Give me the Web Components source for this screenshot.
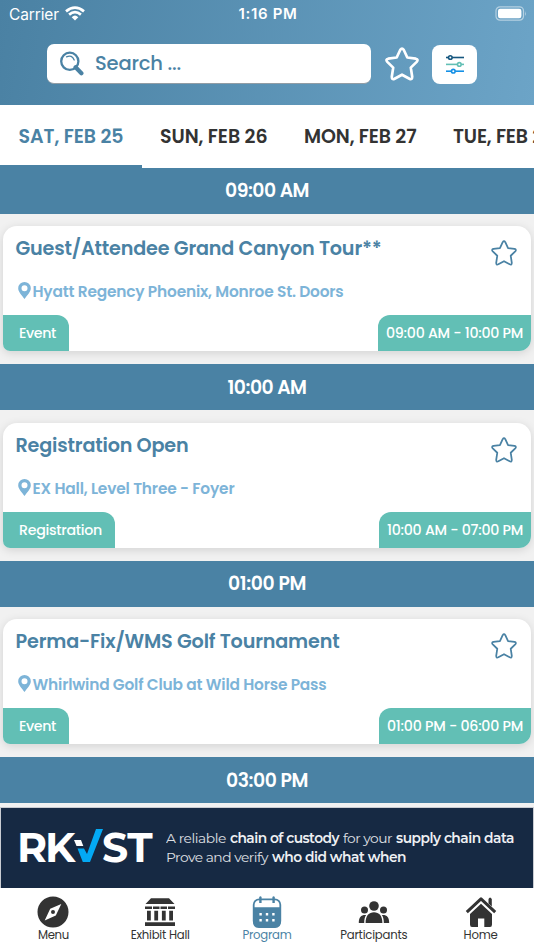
<!DOCTYPE html>
<html lang="en">
<head>
<meta charset="utf-8">
<meta name="viewport" content="width=device-width, initial-scale=1">
<title>Program</title>
<style>
  html, body { margin: 0; height: 100%; overflow: hidden; }
  body {
    --blue: #4a82a4;
    --light: #7db4d8;
    --teal: #62bfb5;
    --ink: #333;
    font-family: Poppins, Inter, "Liberation Sans", sans-serif;
    background: #f1f1f1;
  }
</style>
</head>
<body>
<program-app></program-app>

<script>
const define = (name, html, setup) => {
  const tpl = document.createElement("template");
  tpl.innerHTML = html;
  customElements.define(name, class extends HTMLElement {
    connectedCallback() {
      if (this.shadowRoot) return;
      this.attachShadow({ mode: "open" }).append(tpl.content.cloneNode(true));
      if (setup) setup(this, this.shadowRoot);
    }
  });
};

// <fit-text w="104">label</fit-text>: tracks a label out or in to a given width
define("fit-text", `
  <style>
    :host { display: inline-block; white-space: nowrap; }
    span { display: inline-block; }
  </style>
  <span><slot></slot></span>
`, (el, root) => {
  const w = parseFloat(el.getAttribute("w"));
  const n = el.textContent.length;
  if (!w || !n) return;
  const span = root.querySelector("span");
  span.style.letterSpacing = (w - span.getBoundingClientRect().width) / n + "px";
  el.style.width = w + "px";
});

define("star-icon", `
  <style>
    :host { display: block; width: 26px; height: 26px; }
    svg { display: block; width: 100%; height: 100%; overflow: visible; }
  </style>
  <svg viewBox="0 0 34 34" fill="none" stroke="currentColor" stroke-linejoin="round">
    <path d="M15.3 2.8Q17 .3 18.7 2.8L22.3 10.5L30.8 11.7Q33.8 12.5 31.7 14.9L25.8 20.6L27.2 29.8Q27.2 33.2 24.4 31.8L17 27.7L9.6 31.8Q6.8 33.2 6.8 29.8L8.2 20.6L2.3 14.9Q.2 12.5 3.2 11.7L11.7 10.5Z"/>
  </svg>
`, (el, root) => {
  root.querySelector("path").setAttribute("stroke-width", el.getAttribute("stroke") || 2.3);
});

define("status-bar", `
  <style>
    :host { display: grid; grid-template-columns: 1fr auto 1fr; align-items: center; height: 27px; padding: 0 7px 0 9px; color: #fff; font: 15.5px Inter, sans-serif; }
    .net { display: flex; align-items: center; gap: 6px; }
    .net fit-text { padding-top: 1px; }
    .time { font-weight: 600; font-size: 15px; }
    .battery { justify-self: end; }
    svg { display: block; }
  </style>
  <div class="net"><fit-text w="50">Carrier</fit-text>
    <svg width="20" height="15" viewBox="0 0 20 15" fill="none" stroke="#fff" stroke-width="2.7">
      <path d="M1 5.4Q10-2.2 19 5.4M4.1 8.6Q10 3.6 15.9 8.6"/><path d="M6.7 11.2Q10 8 13.3 11.2L10 14.6Z" fill="#fff" stroke="none"/>
    </svg>
  </div>
  <div class="time"><fit-text w="59">1:16 PM</fit-text></div>
  <svg class="battery" width="32" height="15" viewBox="0 0 32 15">
    <rect x="1" y=".8" width="27.5" height="13.4" rx="4" fill="none" stroke="#fff" stroke-opacity=".5" stroke-width="1.2"/>
    <rect x="3" y="2.8" width="23.4" height="9.4" rx="2.2" fill="#fff"/>
    <path d="M30 5Q31.6 7.5 30 10Z" fill="#fff" fill-opacity=".5"/>
  </svg>
`);

define("search-row", `
  <style>
    :host { display: flex; align-items: center; padding: 17px 0 0 47px; color: #fff; }
    .box { box-sizing: border-box; width: 324px; height: 40px; padding-left: 13px; display: flex; align-items: center; gap: 11px; background: #fff; border-radius: 7px; border-bottom: 1px solid #929da5; color: var(--blue); font-size: 19.5px; font-weight: 500; }
    .box fit-text { padding-bottom: 1px; }
    star-icon { width: 34px; height: 34px; margin: 0 13px 0 14px; }
    .filter { width: 45px; height: 39px; display: grid; place-items: center; background: #fff; border-radius: 8px; }
    svg { display: block; }
  </style>
  <div class="box">
    <svg width="24" height="25" viewBox="0 0 24 25" fill="none" stroke="currentColor">
      <circle cx="9.8" cy="10.3" r="8.6" stroke-width="2.3"/>
      <path d="M6.5 5.8Q12 3.5 14.2 9" stroke-width="1.3" stroke-linecap="round"/>
      <path d="M15.6 16.3L21.4 22.2" stroke-width="4.2" stroke-linecap="round"/>
    </svg>
    <fit-text w="86">Search ...</fit-text>
  </div>
  <star-icon stroke="2.7"></star-icon>
  <div class="filter">
    <svg width="20" height="20" viewBox="0 0 20 20" fill="#fff" stroke-width="1.6">
      <g stroke="#17577f"><path d="M1 3.5H19"/><circle cx="5.3" cy="3.5" r="1.8"/></g>
      <g stroke="#62bfb5"><path d="M1 10.4H19"/><circle cx="14.3" cy="10.4" r="1.8"/></g>
      <g stroke="#1590e6"><path d="M1 17.2H19"/><circle cx="8.3" cy="17.2" r="1.8"/></g>
    </svg>
  </div>
`);

define("day-tab", `
  <style>
    :host { flex: none; display: flex; align-items: center; justify-content: center; box-sizing: border-box; padding: 2px 18px 0 18.5px; color: var(--ink); border-bottom: 3px solid transparent; }
    :host([active]) { color: var(--blue); border-color: var(--blue); }
  </style>
  <slot></slot>
`);

define("day-tabs", `
  <style>
    :host { display: flex; height: 63px; background: #fff; overflow: hidden; font-size: 19px; font-weight: 600; }
  </style>
  <slot></slot>
`);

define("time-bar", `
  <style>
    :host { display: flex; align-items: center; justify-content: center; height: 46px; background: var(--blue); color: #fff; font-size: 18.8px; font-weight: 600; }
  </style>
  <slot></slot>
`);

define("session-card", `
  <style>
    :host { display: flex; flex-direction: column; justify-content: space-between; height: 125px; margin: 12.5px 3px 13px; border-radius: 14px 14px 12px 7px; overflow: hidden; background: #fff; box-shadow: 0 2px 10px rgba(0,0,0,.13); }
    .top { display: flex; justify-content: space-between; padding: 10px 14px 0 12.5px; }
    .title { color: var(--blue); font-size: 19.2px; font-weight: 600; line-height: 26px; }
    .place { display: flex; align-items: center; gap: 2px; margin-top: 19px; padding-left: 2px; color: var(--light); font-size: 15.4px; font-weight: 600; line-height: 22px; }
    .place svg { margin-top: -3px; }
    star-icon { color: var(--blue); margin-top: 4px; }
    .foot { display: flex; justify-content: space-between; height: 36px; color: #fff; font-size: 14.2px; font-weight: 500; line-height: 37px; }
    .tag, .when { background: var(--teal); }
    .tag { padding: 0 13px 0 16px; border-top-right-radius: 12px; }
    .when { padding: 0 8px; border-top-left-radius: 12px; }
  </style>
  <div class="top">
    <div>
      <div class="title"><slot name="title"></slot></div>
      <div class="place">
        <svg width="13" height="17" viewBox="0 0 13 17"><path fill="currentColor" fill-rule="evenodd" d="M6.5 0A6.3 6.3 0 0 0 .2 6.3C.2 10 4 13.5 6.5 17C9 13.5 12.8 10 12.8 6.3A6.3 6.3 0 0 0 6.5 0ZM6.5 3.3A3 3 0 1 1 6.5 9.3A3 3 0 1 1 6.5 3.3Z"/></svg>
        <slot name="place"></slot>
      </div>
    </div>
    <star-icon></star-icon>
  </div>
  <div class="foot">
    <div class="tag"><slot name="tag"></slot></div>
    <div class="when"><slot name="when"></slot></div>
  </div>
`);

define("sponsor-banner", `
  <style>
    :host { display: flex; align-items: center; box-sizing: border-box; height: 80px; margin: 0 1px; padding-left: 16px; background: #162943; color: #eef0f3; outline: 1px solid #c9ccd2; font: 13.8px Montserrat, Inter, sans-serif; }
    .logo { display: flex; align-items: center; width: 135px; height: 48px; margin-right: 14px; color: #fff; font: 700 41px/46px Montserrat, Inter, sans-serif; }
    .logo fit-text { margin-top: -2px; }
    .logo svg { display: block; margin: -6px -3px 0 0; }
    .copy { line-height: 19.5px; }
    .light { font-weight: 400; opacity: .92; }
    b { font-weight: 600; }
    .row { display: flex; gap: 4px; }
  </style>
  <div class="logo">
    <fit-text w="56">RK</fit-text>
    <svg width="32" height="35" viewBox="0 0 32 35"><path fill="#fff" d="M1 12H8L10.3 18H3.5Z"/><path fill="#03a9f4" d="M4.5 20.5H11L14 26L23 1H30L17 34H9.8Z"/></svg>
    <fit-text w="50">ST</fit-text>
  </div>
  <div class="copy">
    <div class="row"><fit-text class="light" w="60">A reliable</fit-text><b><fit-text w="109">chain of custody</fit-text></b><fit-text class="light" w="49">for your</fit-text><b><fit-text w="118">supply chain data</fit-text></b></div>
    <div class="row"><fit-text class="light" w="102">Prove and verify</fit-text><b><fit-text w="134">who did what when</fit-text></b></div>
  </div>
`);

define("nav-item", `
  <style>
    :host { flex: 1; display: flex; flex-direction: column; align-items: center; padding-top: 8px; color: var(--ink); font-size: 11.7px; line-height: 15px; }
    :host([active]) { color: var(--blue); }
    ::slotted(svg) { display: block; width: 32px; height: 32px; fill: currentColor; }
  </style>
  <slot name="icon"></slot>
  <slot></slot>
`);

define("bottom-nav", `
  <style>:host { display: flex; height: 62px; background: #fff; }</style>
  <slot></slot>
`);

define("program-app", `
  <style>
    :host { display: flex; flex-direction: column; height: 950px; overflow: hidden; }
    header { flex: none; height: 105px; background: linear-gradient(100deg, #4a81a3, #6ca4c7); }
    day-tabs, sponsor-banner, bottom-nav { flex: none; }
    main { flex: none; height: 640.5px; overflow: hidden; margin-top: -.5px; }
  </style>
  <header><status-bar></status-bar><search-row></search-row></header>
  <day-tabs>
    <day-tab active><fit-text w="105">SAT, FEB 25</fit-text></day-tab>
    <day-tab><fit-text w="107.5">SUN, FEB 26</fit-text></day-tab>
    <day-tab><fit-text w="112.5">MON, FEB 27</fit-text></day-tab>
    <day-tab><fit-text w="102">TUE, FEB 28</fit-text></day-tab>
  </day-tabs>
  <main>
    <time-bar><fit-text w="84">09:00 AM</fit-text></time-bar>
    <session-card>
      <fit-text slot="title" w="366">Guest/Attendee Grand Canyon Tour**</fit-text>
      <fit-text slot="place" w="311">Hyatt Regency Phoenix, Monroe St. Doors</fit-text>
      <fit-text slot="tag" w="37">Event</fit-text>
      <fit-text slot="when" w="137">09:00 AM - 10:00 PM</fit-text>
    </session-card>
    <time-bar><fit-text w="79">10:00 AM</fit-text></time-bar>
    <session-card>
      <fit-text slot="title" w="173">Registration Open</fit-text>
      <fit-text slot="place" w="202">EX Hall, Level Three - Foyer</fit-text>
      <fit-text slot="tag" w="83">Registration</fit-text>
      <fit-text slot="when" w="136">10:00 AM - 07:00 PM</fit-text>
    </session-card>
    <time-bar><fit-text w="78">01:00 PM</fit-text></time-bar>
    <session-card>
      <fit-text slot="title" w="324">Perma-Fix/WMS Golf Tournament</fit-text>
      <fit-text slot="place" w="294">Whirlwind Golf Club at Wild Horse Pass</fit-text>
      <fit-text slot="tag" w="37">Event</fit-text>
      <fit-text slot="when" w="136">01:00 PM - 06:00 PM</fit-text>
    </session-card>
    <time-bar><fit-text w="82">03:00 PM</fit-text></time-bar>
  </main>
  <sponsor-banner></sponsor-banner>
  <bottom-nav>
    <nav-item>
      <svg slot="icon" viewBox="0 0 32 32"><path fill-rule="evenodd" d="M16 .5A15.5 15.5 0 1 1 16 31.5A15.5 15.5 0 1 1 16 .5ZM24.3 8L13.2 12.7L7.7 24.5L18.8 19.5ZM16 14A2 2 0 1 1 16 18A2 2 0 1 1 16 14Z"/></svg>
      <fit-text w="31">Menu</fit-text>
    </nav-item>
    <nav-item>
      <svg slot="icon" viewBox="0 0 32 32"><path d="M7 2.2H25L30.5 8H1.5ZM1 10.5H8V13H1ZM9 10.5H15.5V13H9ZM16.5 10.5H23V13H16.5ZM24 10.5H31V13H24ZM3 14.8H6.8V24.5H3ZM10.3 14.8H14.1V24.5H10.3ZM17.9 14.8H21.7V24.5H17.9ZM25.2 14.8H29V24.5H25.2ZM1 26.3H31V30H1Z"/></svg>
      <fit-text w="59">Exhibit Hall</fit-text>
    </nav-item>
    <nav-item active>
      <svg slot="icon" viewBox="0 0 32 32"><rect x="2.7" y="3.3" width="26.6" height="27.2" rx="5.5" fill="none" stroke="currentColor" stroke-width="1.8"/><path d="M2 11.2H30V25.5Q30 32 24 32H8Q2 32 2 25.5ZM8.2 1Q9.5-.3 10.6 1V7H8.2ZM21.4 1Q22.6-.3 23.8 1V7H21.4Z"/><path fill="#fff" d="M8.4 17h2.4v2.4h-2.4zM14.8 17h2.4v2.4h-2.4zM21.2 17h2.4v2.4h-2.4zM8.4 23h2.4v2.4h-2.4zM14.8 23h2.4v2.4h-2.4zM21.2 23h2.4v2.4h-2.4z"/></svg>
      <fit-text w="49">Program</fit-text>
    </nav-item>
    <nav-item>
      <svg slot="icon" viewBox="0 0 32 32"><circle cx="16" cy="10" r="4.8"/><circle cx="6.5" cy="14" r="3.5"/><circle cx="25.5" cy="14" r="3.5"/><path d="M7.6 27C7.6 19.5 11 16.2 16 16.2S24.4 19.5 24.4 27ZM.8 27C.8 21 3.2 18.6 8.2 19C6.7 21 6.2 23.5 6.2 27ZM31.2 27C31.2 21 28.8 18.6 23.8 19C25.3 21 25.8 23.5 25.8 27Z"/></svg>
      <fit-text w="67">Participants</fit-text>
    </nav-item>
    <nav-item>
      <svg slot="icon" viewBox="0 0 32 32"><path d="M1.8 16.2L16 2.8L30.2 16.2" fill="none" stroke="currentColor" stroke-width="3" stroke-linejoin="round"/><path d="M23.5 3Q25 0 26.8 3V10.5L23.5 7.5ZM16 7.8L27 18V28.5Q27 31 25 31H19.3V22.5H13V31H7Q5 31 5 28.5V18Z"/></svg>
      <fit-text w="34">Home</fit-text>
    </nav-item>
  </bottom-nav>
</program-app>
`);
</script>
</body>
</html>
